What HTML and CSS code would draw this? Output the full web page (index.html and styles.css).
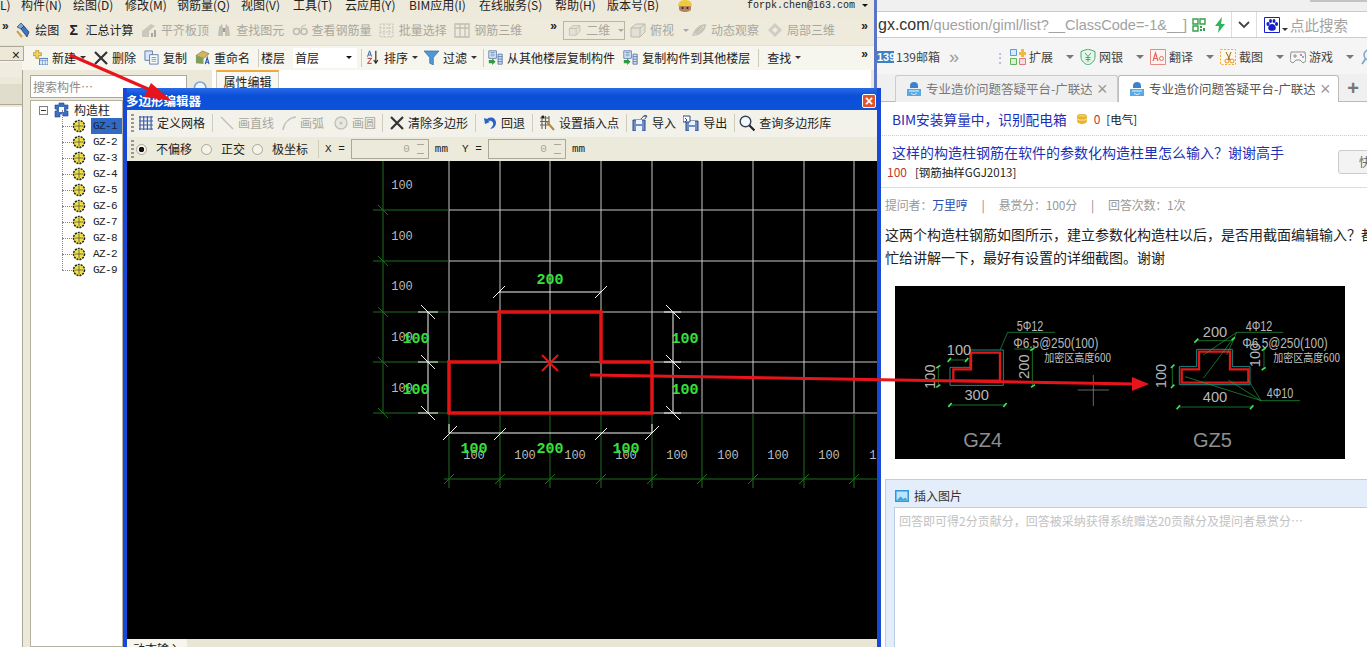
FILE: index.html
```html
<!DOCTYPE html>
<html lang="zh">
<head>
<meta charset="utf-8">
<title>多边形编辑器</title>
<link rel="stylesheet" href="styles.css">
</head>
<body>
<svg class="sprite" width="0" height="0">
  <symbol id="i-draw" viewBox="0 0 16 16"><path d="M2 5l4-4 3 3-3 3z" fill="#7fa6d8" stroke="#345" stroke-width=".7"/><path d="M6 7l3-3 5 6-2 5z" fill="#3d74c4" stroke="#234" stroke-width=".7"/><path d="M2 9l5 6" stroke="#c9a24a" stroke-width="2"/></symbol>
  <symbol id="i-align" viewBox="0 0 16 16"><path d="M1 15V9l9-7 4 2-6 5v6z" fill="#c8c8bc"/><path d="M10 15v-4h2v4zM13 15V8h2v7z" fill="#aaa89c"/></symbol>
  <symbol id="i-bino" viewBox="0 0 16 16"><path d="M2 14l1-9 3-3 1 4v8zM14 14l-1-9-3-3-1 4v8z" fill="#c2c0b4"/><path d="M7 6h2v4H7z" fill="#9c9a90"/></symbol>
  <symbol id="i-glass" viewBox="0 0 16 16"><circle cx="4.500" cy="9.500" r="3" fill="none" stroke="#bdbbb0" stroke-width="1.600"/><circle cx="12" cy="9.500" r="3" fill="none" stroke="#bdbbb0" stroke-width="1.600"/><path d="M7 8c2-4 6-5 7-5" stroke="#bdbbb0" fill="none"/></symbol>
  <symbol id="i-batch" viewBox="0 0 16 16"><path d="M1 2h13v13H1zM1 6h13M1 10h13M5 2v13M10 2v13" fill="none" stroke="#c6c4ba" stroke-dasharray="2 1"/></symbol>
  <symbol id="i-3d" viewBox="0 0 16 16"><path d="M1 2h14v13H1zM1 6h14M6 2v13M11 2v13" fill="none" stroke="#c0beb4" stroke-width="1.300"/></symbol>
  <symbol id="i-box" viewBox="0 0 16 16"><path d="M1 6l5-4h9v8l-5 5H1z" fill="#e3e1d6" stroke="#bdbbb0"/><path d="M1 6h9v9M10 6l5-4" fill="none" stroke="#bdbbb0"/></symbol>
  <symbol id="i-orbit" viewBox="0 0 16 16"><path d="M1 14C3 7 8 2 15 2c0 6-5 12-14 12z" fill="#c4c4b8"/><path d="M3 13C7 10 10 7 13 4" stroke="#ecebe0"/></symbol>
  <symbol id="i-local" viewBox="0 0 16 16"><path d="M8 1l7 7-7 7-7-7z" fill="#cfcdc2"/><path d="M8 5l3 3-3 3-3-3z" fill="#eeecdf"/></symbol>
  <symbol id="i-new" viewBox="0 0 16 16"><path d="M3 0h3v3h3v3H6v3H3V6H0V3h3z" fill="#f3d35a" stroke="#a08a2a" stroke-width=".7"/><path d="M7 9h9v7H7z" fill="#eaf2fb" stroke="#4a78b8"/><path d="M7 11h9M10 11v5M13 11v5" stroke="#4a78b8" stroke-width=".7"/></symbol>
  <symbol id="i-x" viewBox="0 0 14 14"><path d="M1 1l12 12M13 1L1 13" stroke="#333" stroke-width="2.200"/></symbol>
  <symbol id="i-copy" viewBox="0 0 16 16"><path d="M1 1h8v10H1z" fill="#dbe6f6" stroke="#5a7cae"/><path d="M6 5h9v10H6z" fill="#fff" stroke="#5a7cae"/><path d="M8 8h5M8 10h5M8 12h5" stroke="#5a7cae" stroke-width=".8"/></symbol>
  <symbol id="i-rename" viewBox="0 0 16 16"><path d="M1 6l7-5 7 3-6 5z" fill="#d4b45c" stroke="#6b6030" stroke-width=".6"/><path d="M1 6v8l8 1V9z" fill="#7f9f5a"/><path d="M11 15l2-7 2 7M12 13h2" fill="none" stroke="#2a55a5" stroke-width="1.200"/></symbol>
  <symbol id="i-sort" viewBox="0 0 16 18"><path d="M2 8l2.500-7L7 8M3 6h3" fill="none" stroke="#3465a4" stroke-width="1.200"/><path d="M2 10h5l-5 6h5" fill="none" stroke="#b43030" stroke-width="1.200"/><path d="M12 1v14M9.500 12l2.500 4 2.500-4" fill="none" stroke="#222" stroke-width="1.300"/></symbol>
  <symbol id="i-filter" viewBox="0 0 16 16"><path d="M0 1h16L10 8v8l-4-2V8z" fill="#4f97d8" stroke="#2a6099" stroke-width=".6"/></symbol>
  <symbol id="i-floor" viewBox="0 0 18 18"><path d="M1 1h9v9H1z" fill="#e5edf8" stroke="#4a6fa8"/><path d="M3 3h5M3 5h5M3 7h5" stroke="#4a6fa8" stroke-width=".8"/><path d="M1 12h4V10l4 4-4 4v-2H1z" fill="#2f9a3f"/><path d="M12 5h5v12h-5z" fill="#d8e5f5" stroke="#4a6fa8"/><path d="M12 8h5M12 11h5M12 14h5" stroke="#4a6fa8"/></symbol>
  <symbol id="i-grid" viewBox="0 0 14 14"><path d="M1 0v14M4.700 0v14M8.400 0v14M12.100 0v14M0 1h14M0 5h14M0 9h14M0 13h14" stroke="#3a5fb0" stroke-width="1.200" fill="none"/></symbol>
  <symbol id="i-line" viewBox="0 0 14 14"><path d="M1 1l12 12" stroke="#c2c2b8" stroke-width="1.600"/></symbol>
  <symbol id="i-arc" viewBox="0 0 14 14"><path d="M1 14C2 7 7 2 14 1" stroke="#c2c2b8" fill="none" stroke-width="1.600"/></symbol>
  <symbol id="i-circle" viewBox="0 0 14 14"><circle cx="7" cy="7" r="6" fill="#e9e8de" stroke="#c2c2b8" stroke-width="1.400"/><circle cx="7" cy="7" r="1.500" fill="#c2c2b8"/></symbol>
  <symbol id="i-undo" viewBox="0 0 14 14"><path d="M1 2l1 6 5-2-2-1c3-1 6 1 5 4-.5 1.500-2 3-3 4 3 0 6-3 6-6C13 2 8 0 4 3z" fill="#2a63c5"/></symbol>
  <symbol id="i-insert" viewBox="0 0 16 16"><path d="M1 3h9M1 6.500h9M1 10h9M3 1v13M6.500 1v13M10 1v9" stroke="#66635a" stroke-width="1.100" fill="none"/><path d="M8 7l7 8" stroke="#b98a3a" stroke-width="2"/><circle cx="4" cy="2" r="1.400" fill="#222"/></symbol>
  <symbol id="i-import" viewBox="0 0 16 16"><path d="M1 5h12v11H1z" fill="#6f8fc6" stroke="#2f4a86"/><path d="M4 5h6v4H4zM4 11h6v5H4z" fill="#eef3fb"/><path d="M9 4c1-2 3-3 5-3M11.500 0L15 1l-2 3" stroke="#2f4a86" fill="none"/></symbol>
  <symbol id="i-export" viewBox="0 0 16 16"><path d="M3 6h12v10H3z" fill="#6f8fc6" stroke="#2f4a86"/><path d="M6 6h6v4H6zM6 12h6v4H6z" fill="#eef3fb"/><path d="M0 1h7v6H0z" fill="#fff" stroke="#2f4a86"/><path d="M2 3l2 2-2 2" stroke="#2f4a86" fill="none"/></symbol>
  <symbol id="i-search" viewBox="0 0 16 16"><circle cx="6.500" cy="6.500" r="5.300" fill="#f4f8fd" stroke="#345" stroke-width="1.400"/><path d="M10.500 10.500l5 5" stroke="#222" stroke-width="2.200"/></symbol>
  <symbol id="i-gear" viewBox="0 0 14 14"><circle cx="7" cy="7" r="5.500" fill="#f0e040" stroke="#222" stroke-width="1.500" stroke-dasharray="2 1"/><path d="M3 7h8M7 3v8" stroke="#555" stroke-width=".8"/></symbol>
  <symbol id="i-tree" viewBox="0 0 15 16"><path d="M1 3h4V1h5v2h4v4h-2v2h2v5H9v-2H6v3H1V9h2V7H1z" fill="#3f6fc0" stroke="#1f3f80" stroke-width=".6"/><path d="M5 5h5v5H5z" fill="#fff"/></symbol>
  <symbol id="i-qr" viewBox="0 0 14 14"><path d="M1 1h5v5H1zM8 1h5v5H8zM1 8h5v5H1z" fill="none" stroke="#35a04a" stroke-width="1.400"/><path d="M8 8h2v2H8zM11 10h2v3h-2zM8 11h2v2H8z" fill="#35a04a"/></symbol>
  <symbol id="i-bolt" viewBox="0 0 12 16"><path d="M8 0L1 9h4l-1 7 7-9H7z" fill="#2bb55a"/></symbol>
  <symbol id="i-chev" viewBox="0 0 12 8"><path d="M1 1l5 5 5-5" fill="none" stroke="#444" stroke-width="1.800"/></symbol>
  <symbol id="i-paw" viewBox="0 0 16 16"><path d="M0 0h16v16H0z" fill="#fff"/><path d="M.5.500h15v15H.5z" fill="none" stroke="#1620c8"/><ellipse cx="4" cy="7" rx="1.600" ry="2" fill="#1620c8"/><ellipse cx="6.500" cy="4" rx="1.500" ry="2" fill="#1620c8"/><ellipse cx="10" cy="4" rx="1.500" ry="2" fill="#1620c8"/><ellipse cx="12.500" cy="7" rx="1.600" ry="2" fill="#1620c8"/><path d="M8 7c3 0 5 4 3 6-1 1-5 1-6 0-2-2 0-6 3-6z" fill="#1620c8"/></symbol>
  <symbol id="i-ext" viewBox="0 0 16 16"><path d="M.5.500h6v6h-6z" fill="#d7e9fb" stroke="#5b9bdc"/><path d="M.5 9.500h6v6h-6z" fill="#d8f0d0" stroke="#63b55a"/><path d="M9.500 9.500h6v6h-6z" fill="#fbdcdc" stroke="#dc7a7a"/><path d="M11 0h3v3h2v3h-2v2h-3V6H9V3h2z" fill="#f3b93a"/></symbol>
  <symbol id="i-bank" viewBox="0 0 16 16"><path d="M8 0l7 2.500V8c0 4-4 7-7 8-3-1-7-4-7-8V2.500z" fill="#e6f6ea" stroke="#45ac6a"/><path d="M5 4l3 3.500L11 4M8 7.500V13M5.500 8.500h5M5.500 10.500h5" stroke="#45ac6a" fill="none"/></symbol>
  <symbol id="i-ad" viewBox="0 0 16 16"><path d="M.5.500h15v15H.5z" fill="#fff3f0" stroke="#e88a80"/><path d="M3 12l2.500-8L8 12M4 9.500h3" fill="none" stroke="#e2675a" stroke-width="1.200"/><circle cx="11.500" cy="9.500" r="2" fill="none" stroke="#e2675a"/></symbol>
  <symbol id="i-shot" viewBox="0 0 16 16"><path d="M.5.500h15v15H.5z" fill="#fff8e8" stroke="#f0a83a" stroke-dasharray="2 1.500"/><circle cx="7" cy="12" r="2" fill="none" stroke="#e69028"/><circle cx="12" cy="12" r="2" fill="none" stroke="#e69028"/><path d="M6 3l4 8M11 3l-3 8" stroke="#8a6a30"/></symbol>
  <symbol id="i-game" viewBox="0 0 16 14"><path d="M1 2h14l1 9-3 2-3-3H6l-3 3-3-2z" fill="#f6f6f6" stroke="#909090"/><path d="M3 6h4M5 4v4" stroke="#909090"/><circle cx="11" cy="5" r="1" fill="#d55"/><circle cx="13" cy="7" r="1" fill="#59c"/></symbol>
  <symbol id="i-lens" viewBox="0 0 14 16"><circle cx="8" cy="6" r="5" fill="#edf5fc" stroke="#7fa6cf" stroke-width="1.500"/><path d="M4.500 10L1 15" stroke="#7fa6cf" stroke-width="1.800"/></symbol>
  <symbol id="i-site" viewBox="0 0 16 16"><path d="M4 7V5a4 4 0 018 0v2z" fill="#3b83cc"/><path d="M1 8h14v7H1z" fill="#5aa9e4"/><path d="M3 9h10v2H3z" fill="#9fd2f3"/><path d="M5 12c2 2 4 2 6 0" stroke="#e6f5ff" fill="none"/></symbol>
  <symbol id="i-coin" viewBox="0 0 10 10"><ellipse cx="5" cy="2.500" rx="4.800" ry="2.200" fill="#f5cd5a" stroke="#c79a22" stroke-width=".6"/><path d="M.2 2.500v5C.2 9 3 10 5 10s4.800-1 4.800-2.500v-5" fill="#e9b32f"/><path d="M.2 5c1 1.500 8.600 1.500 9.600 0" stroke="#fbe79b" fill="none"/></symbol>
  <symbol id="i-pic" viewBox="0 0 14 12"><path d="M0 0h14v12H0z" fill="#2f97dc"/><path d="M1.500 1.500h11v9h-11z" fill="#bde4fa"/><path d="M1.500 10.500l4-4 3 2.500 2-1.500 2 3z" fill="#3fa5e0"/></symbol>
  <symbol id="i-avatar" viewBox="0 0 16 12"><path d="M1 6C1 2 4 0 8 0s7 2 7 6z" fill="#efc93a"/><path d="M2 6h12v3c0 2-3 3-6 3S2 11 2 9z" fill="#b5835a"/><circle cx="5.500" cy="8" r="1" fill="#222"/><circle cx="10.500" cy="8" r="1" fill="#222"/></symbol>
</svg>

<div class="desk">
  <section class="app">
    <nav class="menu">
      <span class="m m-first">L)</span>
      <span class="m m2">构件(N)</span>
      <span class="m m2">绘图(D)</span>
      <span class="m m2">修改(M)</span>
      <span class="m m3">钢筋量(Q)</span>
      <span class="m m2">视图(V)</span>
      <span class="m m2">工具(T)</span>
      <span class="m m3">云应用(Y)</span>
      <span class="m m-bim">BIM应用(I)</span>
      <span class="m m4">在线服务(S)</span>
      <span class="m m2">帮助(H)</span>
      <span class="m m-ver">版本号(B)</span>
      <svg class="avatar"><use href="#i-avatar"/></svg>
      <span class="account">forpk.chen@163.com</span>
      <span class="caret caret-dark"></span>
    </nav>

    <div class="bar bar-one">
      <div class="group group-a">
        <span class="more more-left">»</span>
        <span class="tool gap-l"><svg class="ic"><use href="#i-draw"/></svg>绘图</span>
        <span class="tool"><span class="sigma">Σ</span>汇总计算</span>
        <span class="tool off"><svg class="ic"><use href="#i-align"/></svg>平齐板顶</span>
        <span class="tool off"><svg class="ic"><use href="#i-bino"/></svg>查找图元</span>
        <span class="tool off"><svg class="ic"><use href="#i-glass"/></svg>查看钢筋量</span>
        <span class="tool off"><svg class="ic"><use href="#i-batch"/></svg>批量选择</span>
        <span class="tool off"><svg class="ic"><use href="#i-3d"/></svg>钢筋三维</span>
        <span class="more more-end">»</span>
      </div>
      <div class="group group-b">
        <span class="combo"><svg class="combo-ic"><use href="#i-box"/></svg><span class="combo-t">二维</span><span class="caret caret-off"></span></span>
        <span class="tool off tool-tight"><svg class="ic"><use href="#i-box"/></svg>俯视<span class="caret caret-off"></span></span>
        <span class="tool off"><svg class="ic"><use href="#i-orbit"/></svg>动态观察</span>
        <span class="tool off"><svg class="ic"><use href="#i-local"/></svg>局部三维</span>
        <span class="more more-end">»</span>
      </div>
    </div>

    <div class="bar bar-two">
      <div class="paneltab"><span class="paneltab-x">×</span></div>
      <span class="tool"><svg class="ic"><use href="#i-new"/></svg>新建<span class="caret"></span></span>
      <span class="tool"><svg class="ic ic-x"><use href="#i-x"/></svg>删除</span>
      <span class="tool"><svg class="ic"><use href="#i-copy"/></svg>复制</span>
      <span class="tool"><svg class="ic"><use href="#i-rename"/></svg>重命名</span>
      <span class="sep"></span>
      <span class="floor-label">楼层</span>
      <span class="floor-select">首层<span class="caret caret-dark"></span></span>
      <span class="sep sep-tight"></span>
      <span class="tool"><svg class="ic"><use href="#i-sort"/></svg>排序<span class="caret"></span></span>
      <span class="tool tool-pull"><svg class="ic"><use href="#i-filter"/></svg>过滤<span class="caret"></span></span>
      <span class="sep sep-close"></span>
      <span class="tool"><svg class="ic"><use href="#i-floor"/></svg>从其他楼层复制构件</span>
      <span class="tool"><svg class="ic"><use href="#i-floor"/></svg>复制构件到其他楼层</span>
      <span class="sep"></span>
      <span class="tool">查找<span class="caret"></span></span>
      <span class="more more-end">»</span>
    </div>

    <div class="work">
      <aside class="dock">
        <div class="dock-b1"></div>
        <div class="dock-b2"></div>
        <div class="dock-white"></div>
      </aside>
      <div class="listpane">
        <div class="searchrow">
          <span class="searchbox">搜索构件…</span>
          <svg class="searchic"><use href="#i-lens"/></svg>
        </div>
        <ul class="tree">
          <li class="tree-root"><span class="expander"></span><svg class="tree-ic"><use href="#i-tree"/></svg>构造柱</li>
          <li class="leaf"><svg class="gear"><use href="#i-gear"/></svg><span class="leaf-t leaf-sel">GZ-1</span></li>
          <li class="leaf"><svg class="gear"><use href="#i-gear"/></svg><span class="leaf-t">GZ-2</span></li>
          <li class="leaf"><svg class="gear"><use href="#i-gear"/></svg><span class="leaf-t">GZ-3</span></li>
          <li class="leaf"><svg class="gear"><use href="#i-gear"/></svg><span class="leaf-t">GZ-4</span></li>
          <li class="leaf"><svg class="gear"><use href="#i-gear"/></svg><span class="leaf-t">GZ-5</span></li>
          <li class="leaf"><svg class="gear"><use href="#i-gear"/></svg><span class="leaf-t">GZ-6</span></li>
          <li class="leaf"><svg class="gear"><use href="#i-gear"/></svg><span class="leaf-t">GZ-7</span></li>
          <li class="leaf"><svg class="gear"><use href="#i-gear"/></svg><span class="leaf-t">GZ-8</span></li>
          <li class="leaf"><svg class="gear"><use href="#i-gear"/></svg><span class="leaf-t">AZ-2</span></li>
          <li class="leaf"><svg class="gear"><use href="#i-gear"/></svg><span class="leaf-t">GZ-9</span></li>
        </ul>
      </div>
      <div class="props">
        <div class="props-tabs"><span class="props-tab">属性编辑</span></div>
      </div>
    </div>
  </section>

  <div class="divider"></div>

  <section class="browser">
    <div class="br-top"></div>
    <div class="addr">
      <span class="url"><b>gx.com</b>/question/giml/list?__ClassCode=-1&amp;__]</span>
      <svg class="addr-qr"><use href="#i-qr"/></svg>
      <svg class="addr-bolt"><use href="#i-bolt"/></svg>
      <span class="addr-chev"><svg class="chev"><use href="#i-chev"/></svg></span>
      <span class="addr-search"><svg class="paw"><use href="#i-paw"/></svg><span class="mini-caret"></span>点此搜索</span>
    </div>
    <div class="favs">
      <span class="fav-139">139</span><span class="fav-mail">139邮箱</span><span class="fav-more">»</span>
      <span class="fav-grip">⋮</span>
      <span class="fav"><svg class="ic"><use href="#i-ext"/></svg>扩展<span class="caret caret-grey"></span></span>
      <span class="fav"><svg class="ic"><use href="#i-bank"/></svg>网银<span class="caret caret-grey"></span></span>
      <span class="fav"><svg class="ic"><use href="#i-ad"/></svg>翻译<span class="caret caret-grey"></span></span>
      <span class="fav"><svg class="ic"><use href="#i-shot"/></svg>截图<span class="caret caret-grey"></span></span>
      <span class="fav"><svg class="ic"><use href="#i-game"/></svg>游戏<span class="caret caret-grey"></span></span>
      <svg class="ic"><use href="#i-lens"/></svg>
    </div>
    <div class="tabs">
      <div class="tab"><svg class="ic"><use href="#i-site"/></svg><span class="tab-t">专业造价问题答疑平台-广联达!</span><span class="tab-x">×</span></div>
      <div class="tab tab-on"><svg class="ic"><use href="#i-site"/></svg><span class="tab-t">专业造价问题答疑平台-广联达!</span><span class="tab-x">×</span></div>
      <span class="tab-plus">+</span>
    </div>
    <div class="page">
      <div class="row-a"><a class="qlink">BIM安装算量中，识别配电箱</a><svg class="coin"><use href="#i-coin"/></svg><span class="red">0</span><span class="cat">[电气]</span></div>
      <div class="row-b">
        <a class="qtitle">这样的构造柱钢筋在软件的参数化构造柱里怎么输入？谢谢高手</a>
        <span class="quick">快</span>
        <div class="qsub"><span class="red">100</span><span class="cat">[钢筋抽样GGJ2013]</span></div>
      </div>
      <div class="meta">提问者：<span class="meta-name">万里哼</span><i class="bar-s">|</i>悬赏分：100分<i class="bar-s">|</i>回答次数：1次</div>
      <p class="qbody">这两个构造柱钢筋如图所示，建立参数化构造柱以后，是否用截面编辑输入？都<br>忙给讲解一下，最好有设置的详细截图。谢谢</p>
      <svg class="figure" viewBox="30 18 1350 519">
        <rect class="f-bg" x="30" y="18" width="1350" height="519"/>
        <path class="f-teal" d="M195 262h60v-52h100v106H195z"/>
        <path class="f-teal" d="M883 260h52v-52h107v52h53v54H883z"/>
        <path class="f-red" d="M258 218h87v84H205v-34h53z"/>
        <path class="f-red" d="M942 215h93v53h55v40H890v-40h52z"/>
        <path class="f-green" d="M345 210l23-53h142M190 375h170M190 240h60M160 258v60M442 207v111M388 207h54M880 381h225M935 182h110M862 258v60M1137 205v60M1055 157h140M1055 157l-100 68M1055 157l-30 68M1045 175l-90 120M1128 362h117M1128 362l-38-62M1128 362l-98-62M1128 362l-228-72"/>
        <path class="f-tick" d="M190 381l10-12M355 381l10-12M188 246l10-12M240 246l10-12M154 264l12 -8M154 322l12-8M436 212l12-8M438 322l12-8M875 388l10-12M1095 388l10-12M928 188l12-12M1040 180l10-8M858 264l10-10M858 324l10-10M1130 212l12-8M1130 270l12-8"/>
        <path class="f-grey" d="M578 330h94M625 285v93"/>
        <text class="f-t" x="222" y="225" text-anchor="middle">100</text>
        <text class="f-t" x="275" y="360" text-anchor="middle">300</text>
        <text class="f-t" transform="translate(150 290) rotate(-90)" text-anchor="middle">100</text>
        <text class="f-t" transform="translate(433 260) rotate(-90)" text-anchor="middle">200</text>
        <text class="f-t" x="395" y="152" textLength="80" lengthAdjust="spacingAndGlyphs">5Φ12</text>
        <text class="f-t" x="385" y="205" textLength="255" lengthAdjust="spacingAndGlyphs">Φ6.5@250(100)</text>
        <text class="f-s" x="478" y="245" textLength="200" lengthAdjust="spacingAndGlyphs">加密区高度600</text>
        <text class="f-t" x="990" y="170" text-anchor="middle">200</text>
        <text class="f-t" x="1082" y="152" textLength="80" lengthAdjust="spacingAndGlyphs">4Φ12</text>
        <text class="f-t" x="1072" y="205" textLength="256" lengthAdjust="spacingAndGlyphs">Φ6.5@250(100)</text>
        <text class="f-s" x="1165" y="245" textLength="200" lengthAdjust="spacingAndGlyphs">加密区高度600</text>
        <text class="f-t" transform="translate(1126 225) rotate(-90)" text-anchor="middle">100</text>
        <text class="f-t" transform="translate(842 288) rotate(-90)" text-anchor="middle">100</text>
        <text class="f-t" x="990" y="366" text-anchor="middle">400</text>
        <text class="f-t" x="1145" y="353" textLength="80" lengthAdjust="spacingAndGlyphs">4Φ10</text>
        <text class="f-b" x="293" y="500" text-anchor="middle">GZ4</text>
        <text class="f-b" x="982" y="500" text-anchor="middle">GZ5</text>
      </svg>
      <div class="reply">
        <div class="reply-head"><svg class="pic"><use href="#i-pic"/></svg>插入图片</div>
        <div class="reply-box">回答即可得2分贡献分，回答被采纳获得系统赠送20贡献分及提问者悬赏分…</div>
      </div>
    </div>
  </section>
</div>

<section class="dialog">
  <header class="dlg-title"><span>多边形编辑器</span><span class="dlg-close">×</span></header>
  <div class="dlg-bar dlg-one">
    <span class="grip"></span>
    <span class="tool"><svg class="ic ic-x"><use href="#i-grid"/></svg>定义网格</span>
    <span class="sep"></span>
    <span class="tool off"><svg class="ic ic-x"><use href="#i-line"/></svg>画直线</span>
    <span class="tool off"><svg class="ic ic-x"><use href="#i-arc"/></svg>画弧</span>
    <span class="tool off"><svg class="ic ic-x"><use href="#i-circle"/></svg>画圆</span>
    <span class="sep sep-after-off"></span>
    <span class="tool"><svg class="ic ic-x"><use href="#i-x"/></svg>清除多边形</span>
    <span class="sep"></span>
    <span class="tool"><svg class="ic ic-x"><use href="#i-undo"/></svg>回退</span>
    <span class="sep sep-m"></span>
    <span class="tool"><svg class="ic"><use href="#i-insert"/></svg>设置插入点</span>
    <span class="sep sep-n"></span>
    <span class="tool"><svg class="ic"><use href="#i-import"/></svg>导入</span>
    <span class="tool"><svg class="ic"><use href="#i-export"/></svg>导出</span>
    <span class="sep sep-w"></span>
    <span class="tool"><svg class="ic"><use href="#i-search"/></svg>查询多边形库</span>
  </div>
  <div class="dlg-bar dlg-two">
    <span class="grip"></span>
    <span class="radio radio-on"></span><span class="radio-t">不偏移</span>
    <span class="radio"></span><span class="radio-t radio-t-n">正交</span>
    <span class="radio"></span><span class="radio-t">极坐标</span>
    <span class="sep sep-x"></span>
    <span class="mono mono-x">X =</span>
    <span class="spin"><span class="spin-v">0</span><span class="spin-b"></span></span>
    <span class="mono mono-mm">mm</span>
    <span class="mono mono-y">Y =</span>
    <span class="spin"><span class="spin-v">0</span><span class="spin-b"></span></span>
    <span class="mono mono-mm2">mm</span>
  </div>
  <svg class="canvas" viewBox="126 161 751 478">
    <path class="g-white" d="M448 161V413M499 161V413M549 161V413M600 161V413M651 161V413M701 161V413M752 161V413M803 161V413M853 161V413M448 210H877M448 261H877M448 312H877M448 362H877M448 413H877"/>
    <path class="g-green" d="M382 161V413M372 210H448M372 261H448M372 312H448M372 362H448M372 413H448M448 413V488M499 413V488M549 413V488M600 413V488M651 413V488M701 413V488M752 413V488M803 413V488M853 413V488M443 479H877"/>
    <path class="g-green" d="M377 205l10 10M377 256l10 10M377 307l10 10M377 357l10 10M377 408l10 10M443 484l10-10M494 484l10-10M544 484l10-10M595 484l10-10M646 484l10-10M696 484l10-10M747 484l10-10M798 484l10-10M848 484l10-10"/>
    <g class="g-label">
      <text x="401" y="189" text-anchor="middle">100</text><text x="401" y="240" text-anchor="middle">100</text><text x="401" y="290" text-anchor="middle">100</text><text x="401" y="341" text-anchor="middle">100</text><text x="401" y="392" text-anchor="middle">100</text>
      <text x="473" y="459" text-anchor="middle">100</text><text x="524" y="459" text-anchor="middle">100</text><text x="574" y="459" text-anchor="middle">100</text><text x="625" y="459" text-anchor="middle">100</text><text x="676" y="459" text-anchor="middle">100</text><text x="727" y="459" text-anchor="middle">100</text><text x="777" y="459" text-anchor="middle">100</text><text x="828" y="459" text-anchor="middle">100</text><text x="879" y="459" text-anchor="middle">100</text>
    </g>
    <path class="g-dim" d="M498 292H600M427 312V413M672 312V413M448 433H651M417 312H437M417 362H437M417 413H437M663 312H680M663 362H680M663 413H680M492 298l12-12M594 298l12-12M420 305l14 14M420 355l14 14M420 406l14 14M665 305l14 14M665 355l14 14M665 406l14 14M442 440l14-14M493 440l12-12M594 440l12-12M644 440l14-14M448 424V433M651 424V433"/>
    <path class="g-poly" d="M448 413V362H498V312H600V362H651V413Z"/>
    <path class="g-center" d="M541 355l16 16M557 355l-16 16"/>
    <g class="g-num">
      <text x="549" y="284" text-anchor="middle">200</text>
      <text x="415" y="343" text-anchor="middle">100</text><text x="415" y="394" text-anchor="middle">100</text>
      <text x="684" y="343" text-anchor="middle">100</text><text x="684" y="394" text-anchor="middle">100</text>
      <text x="473" y="453" text-anchor="middle">100</text><text x="549" y="453" text-anchor="middle">200</text><text x="625" y="453" text-anchor="middle">100</text>
    </g>
  </svg>
  <footer class="dlg-foot"><span class="foot-tab">动态输入</span></footer>
</section>

<svg class="arrows" viewBox="0 0 1367 647">
  <path class="arrow-line" d="M70 55L155 92M590 375L1135 384"/>
  <path class="arrow-head" d="M172 101L144 97L151 83ZM1149 384L1132 377V391Z"/>
</svg>
</body>
</html>
```

FILE: styles.css
```css
* { box-sizing: border-box; }
html, body { margin: 0; padding: 0; }
body {
  position: relative;
  width: 1367px;
  height: 647px;
  overflow: hidden;
  background: #fff;
  color: #222;
  font: 12px/16px "Noto Sans CJK SC", "Liberation Sans", sans-serif;
}
.sprite { position: absolute; }
ul { margin: 0; padding: 0; list-style: none; }
p { margin: 0; }
.desk { display: flex; width: 1367px; height: 647px; }

/* application window */
.app { width: 874px; flex: none; display: flex; flex-direction: column; background: #ece9d8; }
.menu { height: 18px; display: flex; align-items: flex-start; background: #edeadc; line-height: 9px; flex: none; }
.m { display: block; white-space: nowrap; flex: none; }
.m-first { width: 21px; }
.m2 { width: 52px; }
.m3 { width: 64px; }
.m-bim { width: 70px; }
.m4 { width: 76px; }
.m-ver { width: 70px; }
.avatar { width: 16px; height: 12px; flex: none; }
.account { margin: 1px 0 0 54px; font: 10px/10px "Liberation Mono", monospace; }
.caret { display: inline-block; width: 0; height: 0; border: 3px solid transparent; border-top: 3px solid #333; border-bottom: 0; margin-left: 5px; flex: none; }
.caret-dark { border-top-color: #111; }
.caret-off { border-top-color: #aaa; }
.caret-grey { border-left-width: 4px; border-right-width: 4px; border-top: 4px solid #777; margin-left: 10px; }
.menu .caret { margin: 4px 0 0 7px; }

.bar { display: flex; align-items: center; flex: none; white-space: nowrap; }
.bar-one { height: 27px; padding-bottom: 3px; background: #eeebdd; }
.bar-two { height: 25px; padding-bottom: 1px; background: #f6f5ee; gap: 8px; border-top: 1px solid #e6e3d3; }
.bar-two .ic { width: 15px; height: 15px; }
.bar-two .ic-x { width: 14px; height: 14px; }
.bar-two .caret { margin-left: 0; }
.group { display: flex; align-items: center; gap: 7.300px; height: 100%; }
.group-a { width: 563px; flex: none; }
.group-b { flex: 1; gap: 5px; }
.more { font: bold 12px/12px "Liberation Sans", sans-serif; align-self: flex-start; margin-top: 2px; }
.more-left { width: 11px; margin-left: 2px; margin-right: -5px; }
.more-end { margin-left: auto; margin-right: 6px; }
.tool { display: inline-flex; align-items: center; gap: 4px; flex: none; }
.tool-pull { margin-left: -2px; }
.gap-l { margin-right: 3px; }
.off { color: #a9a79c; }
.ic { width: 16px; height: 16px; flex: none; }
.ic-x { width: 14px; height: 14px; }
.sigma { font: bold 14px/16px "Liberation Sans", sans-serif; width: 12px; color: #222; }
.sep { width: 1px; height: 18px; background: #cfccbc; flex: none; }
.sep-tight { margin-right: -5px; }
.sep-close { margin: 0 -4px 0 -2px; }
.combo { width: 62px; height: 19px; border: 1px solid #b8b6a4; display: flex; align-items: center; color: #a9a79c; background: #eeebdd; }
.combo-ic { width: 16px; height: 12px; margin: 0 4px 0 3px; }
.combo-t { width: 28px; }
.group-b .tool { margin-right: 3px; }
.group-b .tool-tight { margin-right: -3px; }
.paneltab { width: 24px; height: 15px; margin-right: 1px; align-self: flex-start; background: #ece9d8; border: 1px solid #aca899; border-left: 0; text-align: right; }
.paneltab-x { font: 14px/12px "Liberation Sans", sans-serif; padding-right: 3px; }
.floor-label { margin: 0 0 0 -6px; }
.floor-select { width: 64px; height: 20px; background: #fff; padding: 0 5px 0 2px; display: flex; align-items: center; justify-content: space-between; margin-right: -4px; }
.floor-select .caret { margin: 0; }

.work { flex: 1; display: flex; min-height: 0; }
.dock { width: 23px; flex: none; display: flex; flex-direction: column; border-right: 1px solid #aca899; }
.dock-b1 { height: 15px; background: #f0ede0; flex: none; margin-top: -8px; }
.dock-b2 { height: 21px; background: #e0ddcc; border-bottom: 1px solid #aca899; flex: none; margin-top: 7px; }
.dock-white { flex: 1; background: #fff; margin-top: 2px; }
.listpane { width: 189px; flex: none; padding: 5px 0 0 7px; display: flex; flex-direction: column; }
.searchrow { height: 25px; display: flex; flex: none; }
.searchbox { width: 157px; height: 23px; background: #fff; border: 1px solid #a9a9a0; color: #8b8b8b; padding: 3px 2px; font-size: 12px; }
.searchic { width: 16px; height: 20px; margin: 5px 0 0 4px; }
.tree { flex: 1; width: 93px; background: #fff; border: 1px solid #b5b2a2; padding-top: 1px; }
.tree-root { height: 16px; display: flex; align-items: center; padding-left: 8px; }
.expander { width: 9px; height: 9px; border: 1px solid #808080; background: #fff; position: relative; margin-right: 6px; }
.expander::after { content: ""; position: absolute; left: 1px; right: 1px; top: 3px; height: 1px; background: #333; }
.tree-ic { width: 15px; height: 16px; margin-right: 5px; }
.leaf { height: 16px; display: flex; align-items: center; padding-left: 41px; position: relative; white-space: nowrap; font: 11px/16px "Liberation Mono", monospace; }
.leaf::before { content: ""; position: absolute; left: 31px; top: 8px; width: 10px; border-top: 1px dotted #888; }
.leaf::after { content: ""; position: absolute; left: 31px; top: -8px; height: 16px; border-left: 1px dotted #888; }
.gear { width: 14px; height: 14px; flex: none; margin-right: 7px; }
.leaf-t { display: block; height: 16px; letter-spacing: -.6px; }
.leaf-sel { background: #316ac5; color: #1b2438; margin-left: -2px; padding-left: 2px; width: 32px; }
.props { flex: 1; background: #fff; border-right: 3px solid #ece9d8; position: relative; }
.props-tabs { height: 20px; background: #fff; padding-left: 4px; }
.props-tab { display: inline-block; width: 63px; height: 20px; text-align: center; line-height: 19px; background: #f8f7f1; border: 1px solid #cfccbc; border-top: 2px solid #eea83d; border-bottom: 0; }

.divider { width: 3px; flex: none; background: #5a75c8; }

/* browser window */
.browser { flex: 1; min-width: 0; display: flex; flex-direction: column; background: #fff; }
.br-top { height: 11px; background: #f0f0f0; flex: none; display: flex; justify-content: flex-end; }
.br-top::after { content: ""; width: 57px; height: 2px; background: #c4c4c4; }
.addr { height: 27px; flex: none; display: flex; align-items: center; background: #fff; border-top: 1px solid #ccc; border-bottom: 1px solid #ccc; overflow: hidden; white-space: nowrap; }
.url { width: 315px; flex: none; padding-left: 1px; font: 14.500px/24px "Liberation Sans", sans-serif; color: #a2a2a2; overflow: hidden; }
.url b { font-weight: 400; font-size: 16px; color: #333; }
.addr-qr { width: 14px; height: 14px; flex: none; }
.addr-bolt { width: 12px; height: 16px; flex: none; margin-left: 8px; }
.addr-chev { width: 26px; height: 25px; flex: none; margin-left: 5px; border: 1px solid #ddd; border-width: 0 1px; display: flex; align-items: center; justify-content: center; }
.chev { width: 12px; height: 8px; }
.addr-search { flex: 1; display: flex; align-items: center; padding-left: 7px; color: #a2a2a2; font-size: 14.500px; }
.paw { width: 16px; height: 16px; flex: none; }
.mini-caret { width: 0; height: 0; border: 3px solid transparent; border-top: 3px solid #333; border-bottom: 0; margin: 10px 2px 0 2px; }
.favs { height: 36px; flex: none; display: flex; align-items: center; background: #f5f5f5; white-space: nowrap; overflow: hidden; padding-top: 2px; }
.fav-139 { width: 17px; flex: none; font: bold 11px/12px "Liberation Sans", sans-serif; color: #fff; background: #3b82c4; text-align: center; }
.fav-mail { margin-left: 2px; width: 53px; flex: none; color: #444; }
.fav-more { width: 45px; flex: none; font: 18px/18px "Liberation Sans", sans-serif; color: #999; }
.fav-grip { width: 16px; flex: none; color: #aaa; }
.fav { width: 70px; flex: none; display: flex; align-items: center; gap: 3px; color: #444; }
.fav .caret { margin-left: 10px; }
.tabs { height: 28px; flex: none; display: flex; align-items: flex-end; background: #f0f0f0; padding-left: 18px; border-bottom: 1px solid #bbb; }
.tab { width: 223px; height: 27px; flex: none; display: flex; align-items: center; padding-left: 10px; background: #f0f0f0; border: 1px solid #ccc; border-bottom: 0; border-radius: 3px 3px 0 0; color: #777; font-size: 12.500px; margin-bottom: -1px; white-space: nowrap; }
.tab-on { background: #fff; color: #555; width: 221px; border-color: #bbb; }
.tab-t { width: 166px; overflow: hidden; margin-left: 4px; flex: none; }
.tab-x { margin-left: 5px; font: 18px/18px "Liberation Sans", sans-serif; color: #999; }
.tab-plus { margin-left: 3px; width: 22px; text-align: center; font: bold 20px/25px "Liberation Sans", sans-serif; color: #777; }
.page { flex: 1; min-height: 0; overflow: hidden; padding-left: 8px; white-space: nowrap; }
.row-a { height: 34px; margin-left: -8px; padding-left: 15px; display: flex; align-items: center; border-bottom: 1px dotted #ccc; font-size: 13.700px; }
.row-a .cat { margin-left: 6px; }
.qlink { color: #1c2fb8; }
.coin { width: 10px; height: 10px; margin: 0 7px 0 10px; }
.red { color: #c0392b; font-size: 12px; }
.cat { margin-left: 8px; font-size: 11.500px; color: #222; }
.row-b { height: 52px; margin-left: -8px; padding: 6px 0 0 15px; border-bottom: 1px solid #ddd; position: relative; }
.qtitle { display: block; color: #1c2fb8; font-size: 14px; line-height: 20px; }
.qsub { margin: 1px 0 0 -5px; line-height: 18px; }
.quick { position: absolute; left: 461px; top: 14px; width: 40px; height: 24px; background: #f3f3f3; border: 1px solid #ccc; border-radius: 3px; padding: 3px 0 0 20px; color: #666; }
.meta { height: 35px; padding-top: 9px; color: #999; font-size: 12px; letter-spacing: -.2px; }
.meta-name { color: #2a4db0; }
.bar-s { font-style: normal; margin: 0 14px; color: #888; }
.qbody { font-size: 14px; line-height: 23px; color: #222; overflow: hidden; }
.figure { display: block; width: 450px; height: 173px; margin: 17px 0 0 10px; }
.f-bg { fill: #000; }
.f-teal { fill: none; stroke: #1c8c8c; stroke-width: 3; }
.f-red { fill: none; stroke: #e01818; stroke-width: 7; }
.f-green { fill: none; stroke: #22a63a; stroke-width: 2; }
.f-tick { fill: none; stroke: #3ce65a; stroke-width: 5; }
.f-grey { fill: none; stroke: #999; stroke-width: 2; }
.f-t { fill: #b8b8b8; font: 44px "Liberation Sans", sans-serif; }
.f-s { fill: #c4c4c4; font: 34px "Noto Sans CJK SC", sans-serif; }
.f-b { fill: #8e8e8e; font: 60px "Liberation Sans", sans-serif; }
.reply { margin: 20px 0 0 0; border: 1px solid #b8cfe6; border-right: 0; height: 200px; background: #e3eefa; }
.reply-head { height: 27px; padding: 4px 0 0 9px; display: flex; align-items: center; color: #333; }
.pic { width: 14px; height: 12px; margin-right: 5px; }
.reply-box { margin-left: 8px; height: 170px; background: #fff; border: 1px solid #b8cfe6; border-right: 0; padding: 5px 4px; color: #c2c2c2; font-size: 12px; }

/* polygon editor dialog: a floating window over the application */
.dialog { position: absolute; left: 123px; top: 88px; width: 758px; height: 559px; display: flex; flex-direction: column; background: #ece9d8; border: solid #1748d6; border-width: 0 4px; overflow: hidden; }
.dlg-title { height: 22px; flex: none; margin: 0 -4px; padding: 3px 5px 0 3px; display: flex; justify-content: space-between; align-items: center; background: linear-gradient(#2a6ae8, #0a4fd6 35%, #0b52dc); color: #fff; font-weight: 700; font-size: 12.500px; }
.dlg-close { width: 14px; height: 14px; background: #e0532d; border: 1px solid #fff; border-radius: 2px; text-align: center; font: bold 14px/12px "Liberation Sans", sans-serif; }
.dlg-bar { display: flex; align-items: center; flex: none; white-space: nowrap; }
.dlg-one { height: 27px; padding-bottom: 2px; background: #f3f2ea; gap: 7px; }
.dlg-two { height: 24px; background: #eceadb; }
.grip { width: 3px; height: 18px; margin: 0 -2px 0 4px; background: repeating-linear-gradient(#9a988a 0 2px, transparent 2px 4px); flex: none; }
.dlg-two .grip { margin-right: 4px; }
.dlg-one .off { margin-right: 3px; }
.dlg-one .sep + .off { margin-right: 1px; }
.sep-after-off { margin-left: -4px; }
.sep-m { margin-right: -1px; }
.sep-n { margin-right: -2px; }
.sep-w { margin-right: -3px; }
.radio { width: 11px; height: 11px; border: 1px solid #a8a698; border-radius: 50%; background: #f4f3ea; flex: none; }
.radio-on { background: radial-gradient(circle, #111 0 2.500px, #f4f3ea 3px); margin-left: -2px; }
.radio-t { margin: 0 9px; flex: none; }
.radio-t-n { margin-right: 7px; }
.sep-x { margin-left: 1px; }
.mono { font: 11px/14px "Liberation Mono", monospace; flex: none; }
.mono-x { margin: 0 6px 0 6px; }
.mono-mm { margin: 0 14px 0 6px; }
.mono-y { margin-right: 6px; }
.mono-mm2 { margin-left: 6px; }
.spin { width: 78px; height: 20px; flex: none; background: #eceadb; border: 1px solid #aca899; position: relative; color: #a9a79c; padding-right: 18px; text-align: right; font: 11px/18px "Liberation Mono", monospace; }
.spin-b { position: absolute; right: 4px; top: 4px; width: 7px; height: 10px; border-top: 1px solid #aca899; border-bottom: 1px solid #aca899; }
.canvas { display: block; width: 751px; height: 478px; flex: none; background: #000; }
.g-white { fill: none; stroke: #c8c8c8; stroke-width: 1; }
.g-green { fill: none; stroke: #1e6e1e; stroke-width: 1; }
.g-label text { fill: #bdbdbd; font: 12px "Liberation Mono", monospace; }
.g-dim { fill: none; stroke: #f5f5f5; stroke-width: 1; }
.g-poly { fill: none; stroke: #e41414; stroke-width: 3.500; }
.g-center { fill: none; stroke: #e41414; stroke-width: 2; }
.g-num text { fill: #36e03a; font: bold 15px "Liberation Mono", monospace; }
.dlg-foot { flex: 1; background: #e9e6d6; }
.foot-tab { display: block; width: 60px; height: 9px; background: #f6f5ee; padding-left: 6px; line-height: 20px; overflow: visible; }

/* hand-drawn annotation arrows lying over everything */
.arrows { position: absolute; left: 0; top: 0; width: 1367px; height: 647px; pointer-events: none; }
.arrow-line { fill: none; stroke: #e8141c; stroke-width: 3; }
.arrow-head { fill: #e8141c; }
```
